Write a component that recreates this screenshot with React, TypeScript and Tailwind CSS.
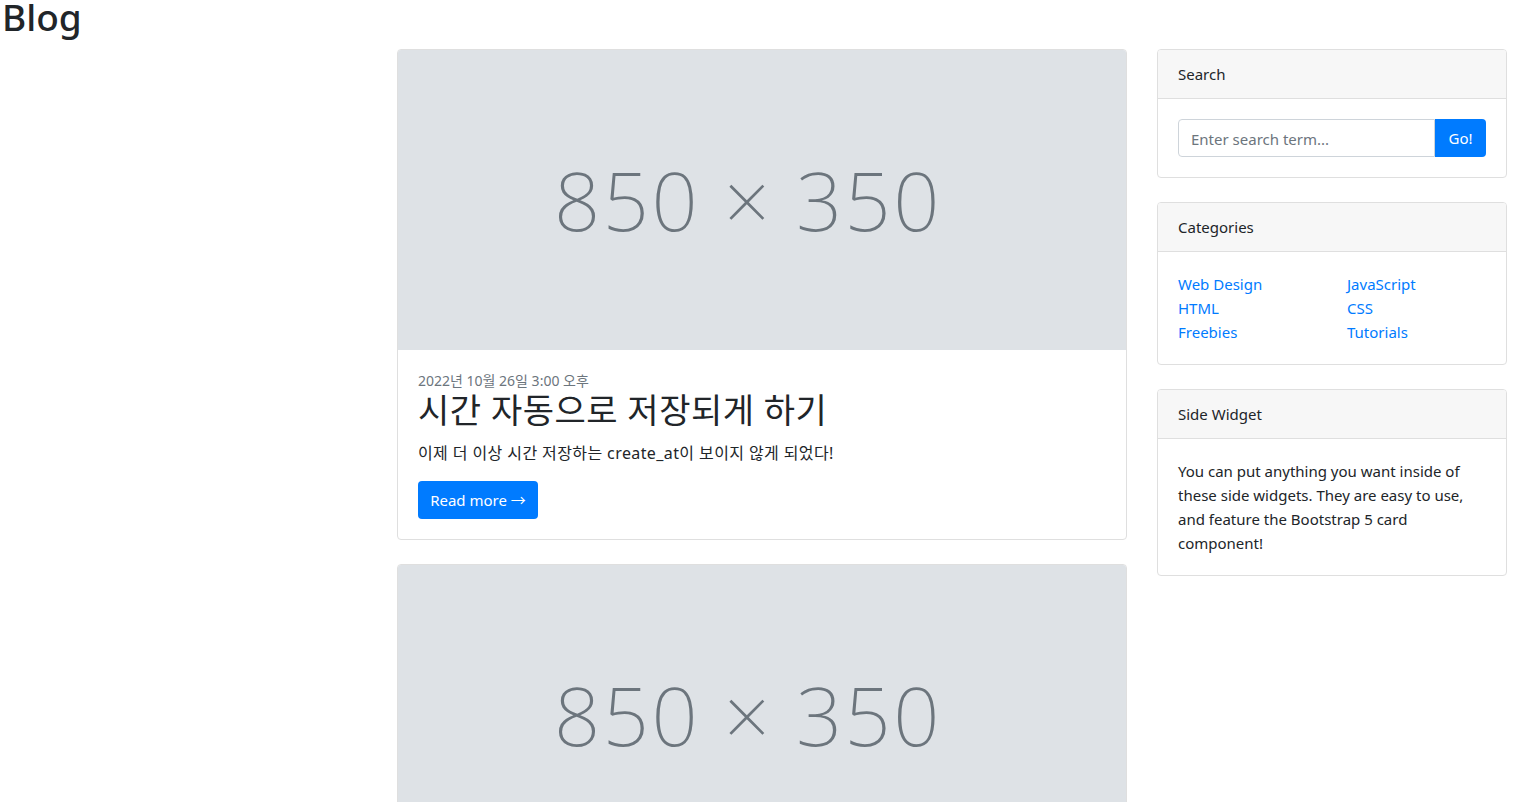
const font = { fontFamily: '"Noto Sans", "Noto Sans CJK KR", sans-serif' };

const Placeholder = () => (
  <div className="h-[300px] bg-[#dee2e6] flex items-center justify-center pr-[28px] pb-[2px]">
    <span className="text-[81px] font-extralight tracking-[2.5px] text-[#6c757d] leading-none">850 × 350</span>
  </div>
);

const SideCard = ({ title, children }: { title: string; children: React.ReactNode }) => (
  <div className="border border-[#dfdfdf] rounded-[4px] mb-6 overflow-hidden">
    <div className="bg-[#f7f7f7] border-b border-[#dfdfdf] px-5 py-3 text-[15px] leading-6 text-[#212529]">
      {title}
    </div>
    <div className="p-5">{children}</div>
  </div>
);

export default function App() {
  const cats = [
    ["Web Design", "HTML", "Freebies"],
    ["JavaScript", "CSS", "Tutorials"],
  ];

  return (
    <div className="bg-white text-[#212529] min-h-screen overflow-hidden h-[802px]" style={font}>
      <h1 className="text-[37px] font-medium leading-[37px] pl-[2px] -mt-[2px] mb-[14px]">Blog</h1>
      <div className="flex gap-[30px] pl-[397px]">
        <div className="w-[730px] flex flex-col gap-6">
          <div className="border border-[#dfdfdf] rounded-[4px] overflow-hidden">
            <Placeholder />
            <div className="p-5">
              <div className="text-[14px] leading-[21px] text-[#6c757d]">2022년 10월 26일 3:00 오후</div>
              <h2 className="text-[34px] leading-[38px] tracking-[0.5px] mb-3">시간 자동으로 저장되게 하기</h2>
              <p className="text-[16px] leading-6 tracking-[0.4px] mb-4">
                이제 더 이상 시간 저장하는 create_at이 보이지 않게 되었다!
              </p>
              <button className="h-[38px] w-[120px] bg-[#007bff] text-white text-[15px] rounded-[4px]">
                Read more →
              </button>
            </div>
          </div>
          <div className="border border-[#dfdfdf] rounded-[4px] overflow-hidden">
            <Placeholder />
          </div>
        </div>
        <div className="w-[350px]">
          <SideCard title="Search">
            <div className="flex h-[38px]">
              <input
                className="w-[257px] border border-[#ced4da] rounded-l-[4px] px-3 pt-[2px] text-[15px] placeholder:text-[#6c757d] outline-none"
                placeholder="Enter search term..."
              />
              <button className="w-[51px] bg-[#007bff] text-white text-[15px] rounded-r-[4px]">Go!</button>
            </div>
          </SideCard>
          <SideCard title="Categories">
            <div className="grid grid-cols-[169px_1fr]">
              {cats.map((col, i) => (
                <ul key={i}>
                  {col.map((c) => (
                    <li key={c} className="text-[15px] leading-6 text-[#007bff]">
                      {c}
                    </li>
                  ))}
                </ul>
              ))}
            </div>
          </SideCard>
          <SideCard title="Side Widget">
            <p className="text-[15px] leading-6">
              You can put anything you want inside of these side widgets. They are easy to use, and feature the
              Bootstrap 5 card component!
            </p>
          </SideCard>
        </div>
      </div>
    </div>
  );
}
